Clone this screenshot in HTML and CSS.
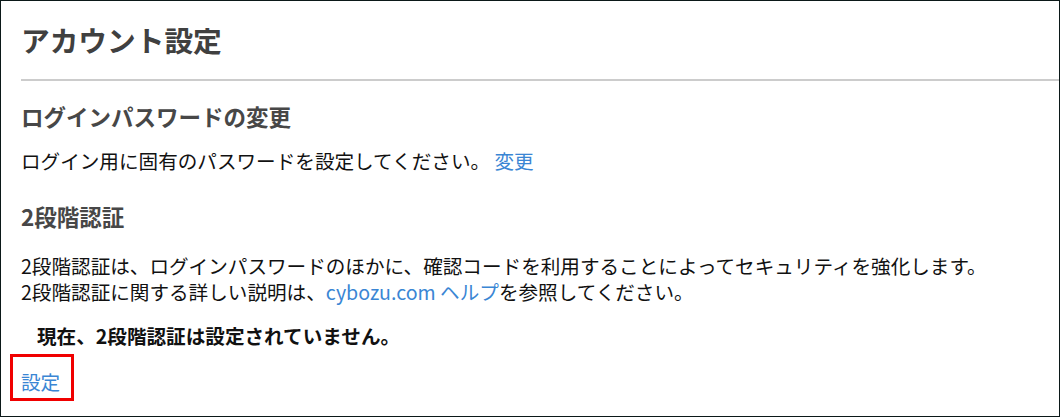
FILE: index.html
```html
<!DOCTYPE html>
<html lang="ja">
<head>
<meta charset="utf-8">
<title>アカウント設定</title>
<link rel="stylesheet" href="styles.css">
</head>
<body>
<div class="page">
  <header class="page-header">
    <h1 class="page-title">アカウント設定</h1>
  </header>
  <hr class="divider">
  <section class="section">
    <h2 class="section-title first">ログインパスワードの変更</h2>
    <p class="text one">ログイン用に固有のパスワードを設定してください。 <a class="link" href="#">変更</a></p>
  </section>
  <section class="section">
    <h2 class="section-title second">2段階認証</h2>
    <div class="desc">
      <p class="text">2段階認証は、ログインパスワードのほかに、確認コードを利用することによってセキュリティを強化します。</p>
      <p class="text">2段階認証に関する詳しい説明は、<a class="link" href="#">cybozu.com ヘルプ</a>を参照してください。</p>
    </div>
    <p class="status">現在、2段階認証は設定されていません。</p>
    <div class="action"><a class="link setup" href="#">設定</a></div>
  </section>
</div>
</body>
</html>
```

FILE: styles.css
```css
html, body {
  margin: 0;
  padding: 0;
  background: #ffffff;
}

body {
  font-family: "Noto Sans CJK JP", "Noto Sans", sans-serif;
  color: #111111;
}

.page {
  box-sizing: border-box;
  width: 1060px;
  height: 417px;
  border: 1px solid #0b1818;
  background: #ffffff;
  overflow: hidden;
}

.page-header {
  padding: 19px 20px 19px;
}

.page-title {
  margin: 0;
  font-size: 28.7px;
  line-height: 40px;
  font-weight: 700;
  color: #404040;
}

.divider {
  margin: 0 0 0 20px;
  height: 2px;
  border: 0;
  background: #cccccc;
}

.section {
  padding: 0 20px;
}

.section-title {
  margin: 0;
  font-size: 22.5px;
  line-height: 30px;
  font-weight: 700;
  color: #474747;
}

.section-title.first {
  margin-top: 20px;
}

.section-title.second {
  margin-top: 27px;
}

.text {
  margin: 0;
  font-size: 19.6px;
  line-height: 26px;
  color: #111111;
}

.text.one {
  margin-top: 17px;
}

.desc {
  margin-top: 22px;
}

.status {
  margin: 18px 0 0;
  padding-left: 16px;
  font-size: 19.6px;
  line-height: 26px;
  font-weight: 700;
  color: #111111;
}

.action {
  margin-top: 20px;
  font-size: 19.6px;
  line-height: 26px;
}

.link {
  color: #3a86d4;
  text-decoration: none;
}

.setup {
  position: relative;
  display: inline-block;
}

.setup::after {
  content: "";
  position: absolute;
  top: -15px;
  left: -11px;
  right: -14px;
  bottom: -6px;
  border: 3px solid #f00000;
}
```
